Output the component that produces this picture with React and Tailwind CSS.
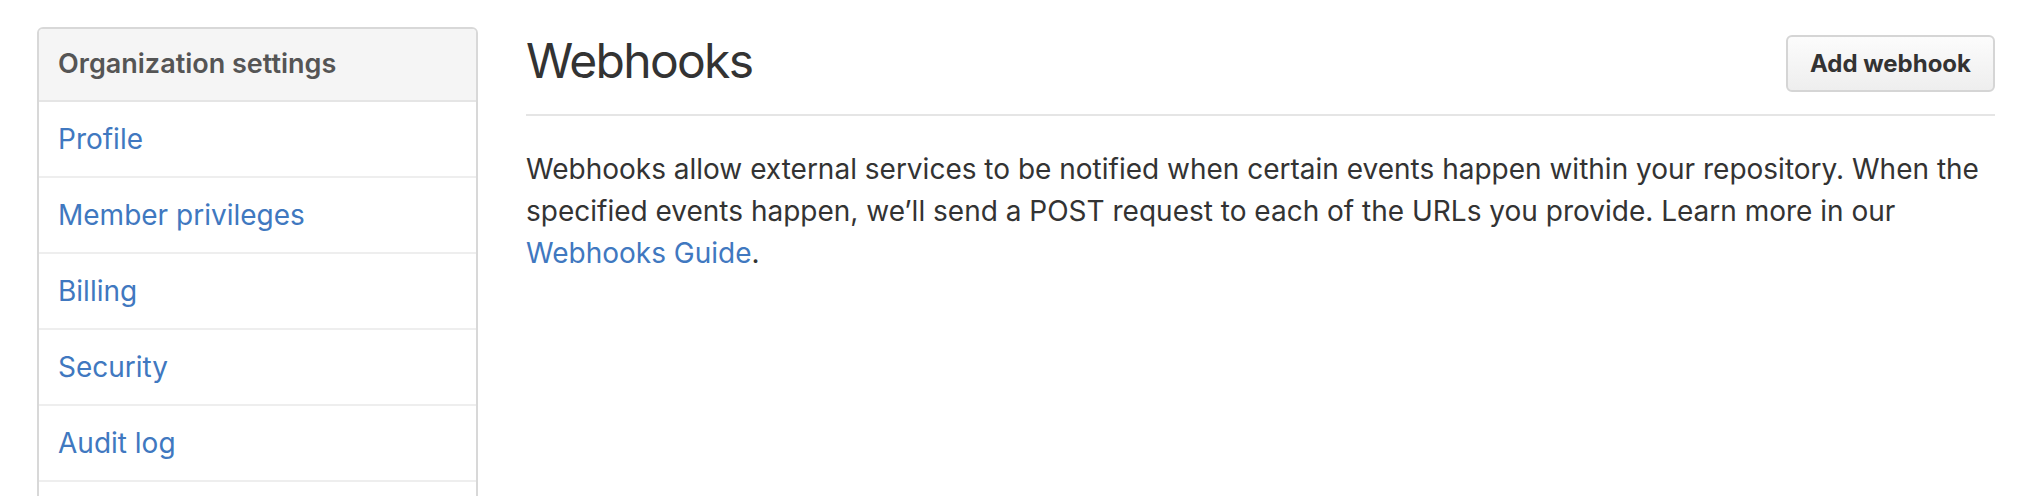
import React from "react";

const items = ["Profile", "Member privileges", "Billing", "Security", "Audit log"];

export default function App() {
  return (
    <div className="h-[496px] overflow-hidden bg-white font-['Inter',sans-serif] text-[#333]">
      <div className="flex pl-[37px] pr-[43px] gap-[48px]">
        <aside className="w-[441px] shrink-0 mt-[27px]">
          <nav className="border-2 border-[#d8d8d8] rounded-[6px] overflow-hidden">
            <div className="h-[73px] px-[19px] flex items-center bg-[#f5f5f5] border-b-2 border-[#e5e5e5] text-[27px] font-semibold text-[#555]">
              Organization settings
            </div>
            {items.map((it) => (
              <a
                key={it}
                href="#"
                className="h-[76px] px-[19px] flex items-center border-b-2 border-[#eee] text-[28px] text-[#4078c0]"
              >
                {it}
              </a>
            ))}
            <div className="h-[76px] border-b-2 border-[#eee]" />
          </nav>
        </aside>
        <main className="flex-1 min-w-0">
          <div className="flex items-center justify-between pt-[35px] pb-[22px] border-b-2 border-[#e5e5e5]">
            <h2 className="mb-[5px] text-[48px] leading-[50px] font-normal tracking-[-0.035em] text-[#333]">
              Webhooks
            </h2>
            <button className="h-[57px] px-[22px] border-2 border-[#d5d5d5] rounded-[6px] bg-linear-to-b from-[#fcfcfc] to-[#eee] text-[24px] font-bold text-[#333]">
              Add webhook
            </button>
          </div>
          <p className="mt-[32px] text-[28px] leading-[42px] text-[#333]">
            Webhooks allow external services to be notified when certain events happen within your
            repository. When the specified events happen, we’ll send a POST request to each of the
            URLs you provide. Learn more in our{" "}
            <a href="#" className="text-[#4078c0]">
              Webhooks Guide
            </a>
            .
          </p>
        </main>
      </div>
    </div>
  );
}
